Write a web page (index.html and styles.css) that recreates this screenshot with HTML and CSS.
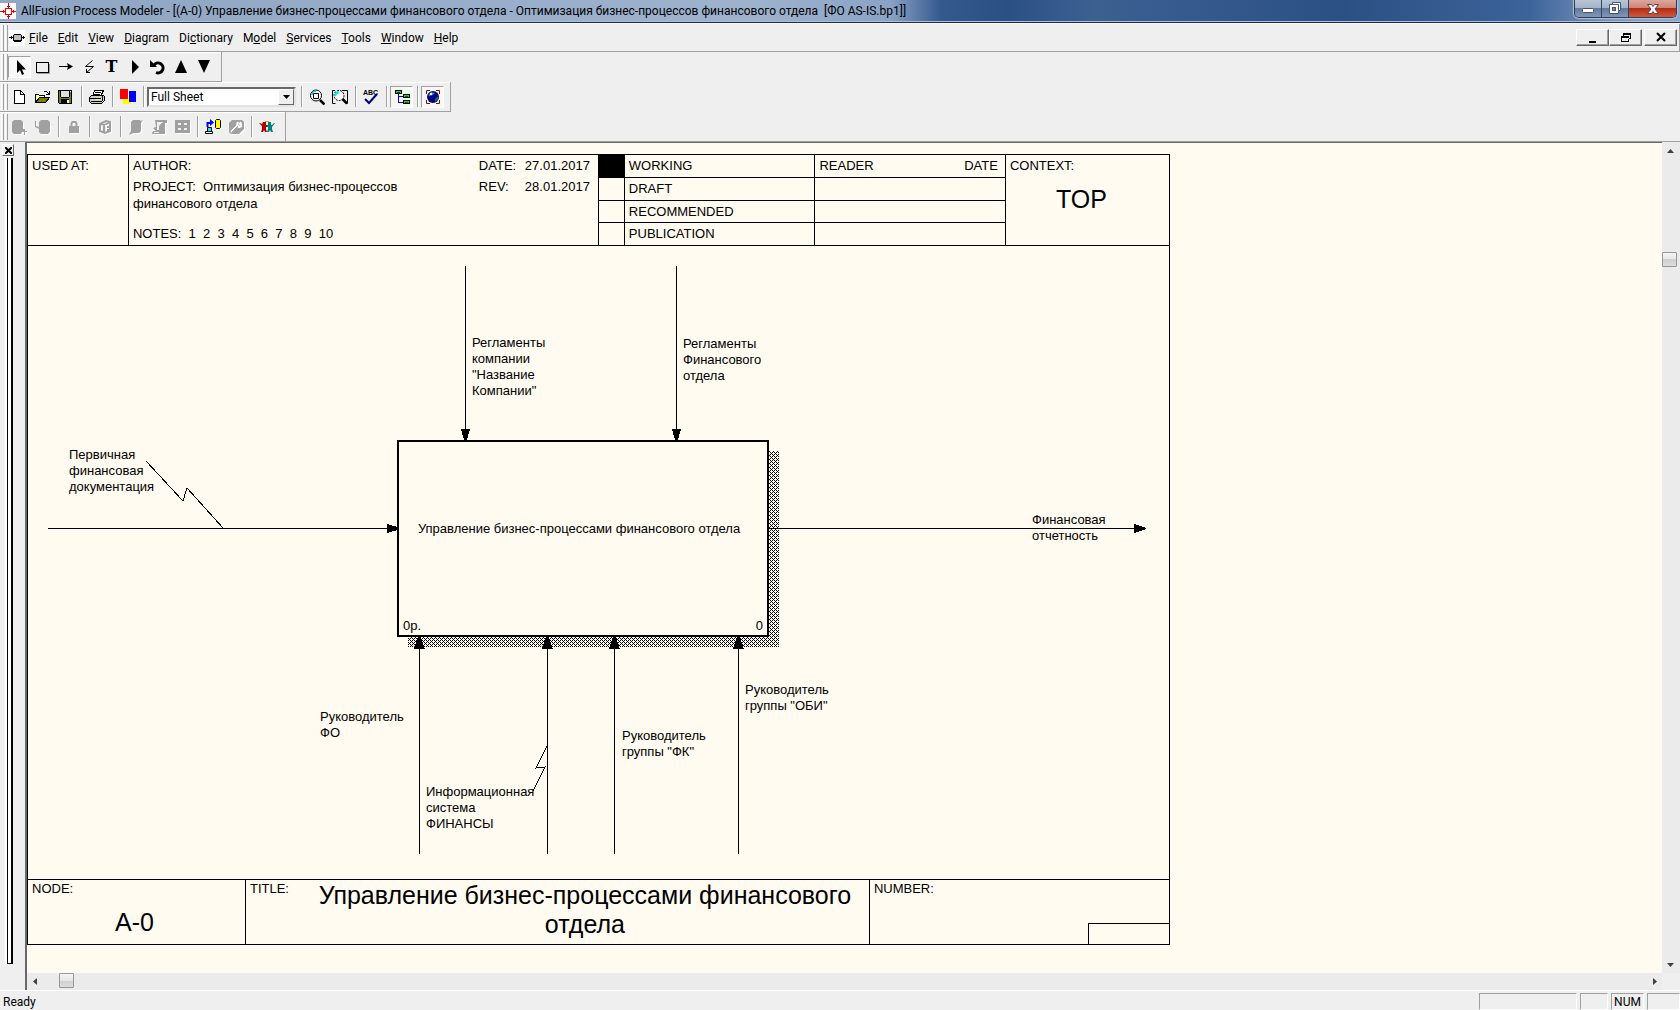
FILE: index.html
```html
<!DOCTYPE html>
<html lang="ru">
<head>
  <title>AllFusion Process Modeler</title>
  <meta charset="utf-8" />
  <meta name="viewport" content="width=device-width, initial-scale=1.0">
  <link rel="stylesheet" href="styles.css">
</head>
<body>

  <header class="titlebar">
    <svg class="app-icon" width="16" height="16" viewBox="0 0 16 16" shape-rendering="crispEdges">
      <rect width="16" height="16" fill="#fff" />
      <path d="M5.5 5.5h6v6h-6z" fill="none" stroke="#e00" />
      <path d="M8 0h1v5h-1zM8 12h1v4h-1zM0 8h5v1h-5zM12 8h4v1h-4zM7 3h3v1h-3zM7 13h3v1h-3zM3 7h1v3h-1zM13 7h1v3h-1z" fill="#e00" />
    </svg>
    <h1>AllFusion Process Modeler - [(A-0) Управление бизнес-процессами финансового отдела - Оптимизация бизнес-процессов финансового отдела &nbsp;[ФО AS-IS.bp1]]</h1>
    <div class="window-buttons">
      <button class="minimize" aria-label="Minimize">
        <svg width="14" height="12" viewBox="0 0 14 12"><rect x="1.5" y="5.5" width="11" height="4" rx="1" fill="#fff" stroke="#4a5468" /></svg>
      </button>
      <button class="restore" aria-label="Restore">
        <svg width="14" height="13" viewBox="0 0 14 13"><path d="M4.500.500h8v8h-2v3h-9v-9h3z" fill="#fff" stroke="#4a5468" /><path d="M4.500 2.500h6v6" fill="none" stroke="#4a5468" /><rect x="4.500" y="5.500" width="3" height="3" fill="#7c8ca6" stroke="#4a5468" /></svg>
      </button>
      <button class="close" aria-label="Close">
        <svg width="14" height="12" viewBox="0 0 14 12"><path d="M1.500 1.500h4l1.500 2l1.500-2h4l-3.500 4.500l3.500 4.500h-4l-1.500-2l-1.500 2h-4l3.500-4.500z" fill="#fff" stroke="#5c4450" /></svg>
      </button>
    </div>
  </header>

  <nav class="menubar">
    <span class="grip"></span>
    <svg class="doc-icon" width="16" height="16" viewBox="0 0 16 16" shape-rendering="crispEdges">
      <rect width="16" height="16" fill="#fff" />
      <path d="M5 4h7v1h1v6h-1v1h-7v-1h-1v-6h1z" fill="#000" />
      <path d="M5 5h7v5h-7z" fill="#c0c0c0" />
      <path d="M0 7h4v1h-4zM2 6h1v3h-1zM13 7h3v1h-3zM14 6h1v3h-1z" fill="#000" />
    </svg>
    <a href="#"><u>F</u>ile</a>
    <a href="#"><u>E</u>dit</a>
    <a href="#"><u>V</u>iew</a>
    <a href="#"><u>D</u>iagram</a>
    <a href="#">Di<u>c</u>tionary</a>
    <a href="#">M<u>o</u>del</a>
    <a href="#"><u>S</u>ervices</a>
    <a href="#"><u>T</u>ools</a>
    <a href="#"><u>W</u>indow</a>
    <a href="#"><u>H</u>elp</a>
    <div class="mdi-buttons">
      <button aria-label="Minimize diagram"><svg width="12" height="11" viewBox="0 0 12 11"><path d="M2 9h7v2h-7z" /></svg></button>
      <button aria-label="Restore diagram"><svg width="12" height="11" viewBox="0 0 12 11" shape-rendering="crispEdges"><path d="M3 1h8v6h-3v-1h2v-3h-6v1h-1zM1 4h8v6h-8zM2 6v3h6v-3z" fill-rule="evenodd" /></svg></button>
      <button aria-label="Close diagram"><svg width="12" height="11" viewBox="0 0 12 11"><path d="M2 1l8 8M10 1l-8 8" stroke="#000" stroke-width="2" /></svg></button>
    </div>
  </nav>

  <!-- diagram tools -->
  <div class="toolbar tools">
    <span class="grip"></span>
    <button class="tool pressed" aria-label="Pointer"><svg viewBox="0 0 16 16"><path d="M6 1v13l3-3l2 5l2-1l-2-4.500h4z" /></svg></button>
    <button class="tool" aria-label="Activity box"><svg viewBox="0 0 16 16" shape-rendering="crispEdges"><path d="M3 14.500h12.500v-10" fill="none" stroke="#a0a0a0" /><path d="M2.500 3.500h12v10h-12z" fill="none" stroke="#000" /></svg></button>
    <button class="tool" aria-label="Arrow"><svg viewBox="0 0 16 16"><path d="M2 7h9v1h-9zM10 4l6 3.500l-6 3.500l1-3.500z" /></svg></button>
    <button class="tool" aria-label="Squiggle"><svg viewBox="0 0 16 16"><path d="M12.500 1.500l-7 6h8l-7 6M6.500 14v-4M6 13.500h4" fill="none" stroke="#000" /></svg></button>
    <button class="tool text-tool" aria-label="Text">T</button>
    <button class="tool" aria-label="Diagram dictionary"><svg viewBox="0 0 16 16"><path d="M6 1l7 7l-7 7z" /></svg></button>
    <button class="tool" aria-label="Go to sibling"><svg viewBox="0 0 16 16"><path d="M5 6a5 5 0 1 1 2 7.500" fill="none" stroke="#000" stroke-width="3" /><path d="M1 1v7h7z" /></svg></button>
    <button class="tool" aria-label="Go to parent"><svg viewBox="0 0 16 16"><path d="M9 1l6 13h-12z" /></svg></button>
    <button class="tool" aria-label="Go to child"><svg viewBox="0 0 16 16"><path d="M9 14l6-13h-12z" /></svg></button>
  </div>

  <!-- standard toolbar -->
  <div class="toolbar standard">
    <span class="grip"></span>
    <button class="tool" aria-label="New"><svg viewBox="0 0 16 16" shape-rendering="crispEdges"><path d="M3.500 1.500h6l4 4v9h-10z" fill="#fff" stroke="#000" /><path d="M9.500 1.500v4h4" fill="none" stroke="#000" /></svg></button>
    <button class="tool" aria-label="Open"><svg viewBox="0 0 16 16" shape-rendering="crispEdges"><path d="M1.500 13.500v-8h3l1 1h5v2" fill="#ffff9c" stroke="#000" /><path d="M1.500 13.500l4-5h10l-4 5z" fill="#808000" stroke="#000" /><path d="M9 3h1v-1h3v1h1v1h1v-2h1v4h-4v-1h2v-1h-1v-1h-3z" /></svg></button>
    <button class="tool" aria-label="Save"><svg viewBox="0 0 16 16" shape-rendering="crispEdges"><path d="M1 1h14v14h-13l-1-1z" /><path d="M2 2h12v12h-12z" fill="#808000" /><path d="M4 2h8v6h-8z" fill="#e0e0e0" /><path d="M4 10h8v5h-8zM3 1h1v7h-1zM12 1h1v7h-1zM4 8h8v1h-8z" /><path d="M10 11h2v3h-2zM13 2h1v1h-1z" fill="#fff" /></svg></button>
    <span class="sep"></span>
    <button class="tool" aria-label="Print"><svg viewBox="0 0 16 16" shape-rendering="crispEdges"><path d="M5.500 1.500h9l-3 6h-8z" fill="#fff" stroke="#000" /><path d="M6 3h6v1h-6zM5 5h6v1h-6z" /><path d="M.500 8.500l2-2h12l1 1v4l-3 3h-10l-2-2z" fill="#d0d0d0" stroke="#000" /><path d="M1 9h11v1h-11zM2 12h11v1h-11zM13 7h1v5h-1z" /><path d="M7 10h4v1h-4z" fill="#ff0" /></svg></button>
    <span class="sep"></span>
    <button class="tool" aria-label="Colors"><svg viewBox="0 0 16 16" shape-rendering="crispEdges"><path d="M3 7h8v8h-8z" fill="#ff0" /><path d="M9 2h7v11h-7z" fill="#00f" /><path d="M0 0h8v10h-8z" fill="#f00" /></svg></button>
    <span class="sep"></span>
    <div class="zoom-box">
      <select aria-label="Zoom">
        <option>Full Sheet</option>
      </select>
      <span class="drop-arrow"><svg width="7" height="4" viewBox="0 0 7 4"><path d="M0 0h7l-3.500 4z" /></svg></span>
    </div>
    <span class="sep"></span>
    <button class="tool" aria-label="Zoom in"><svg viewBox="0 0 16 16"><circle cx="7" cy="6.500" r="5.500" fill="#fff" stroke="#000" /><path d="M3 6a4 4 0 0 1 4-4" fill="none" stroke="#0cc" stroke-width="1.500" /><path d="M4.500 4.500h5v5h-5z" fill="#fff" stroke="#000" /><path d="M11 11l4.500 4.500" stroke="#000" stroke-width="2.500" /></svg></button>
    <button class="tool" aria-label="Zoom to fit"><svg viewBox="0 0 16 16"><path d="M3 1.500h-2.500v13h3M10 1.500h5.500v13h-2" fill="none" stroke="#000" /><circle cx="7" cy="6.500" r="5" fill="#fff" stroke="#000" stroke-dasharray="2 1" /><path d="M3 7a5 5 0 0 1 4-4" fill="none" stroke="#0ee" stroke-width="2" /><path d="M10.500 10l4.500 4.500" stroke="#000" stroke-width="2.500" /></svg></button>
    <span class="sep"></span>
    <button class="tool" aria-label="Spelling"><svg viewBox="0 0 16 16"><text x="0" y="6" class="abc">ABC</text><path d="M2 10l4 4l8-9" fill="none" stroke="#000080" stroke-width="2" /></svg></button>
    <span class="sep"></span>
    <button class="tool pressed" aria-label="Model explorer"><svg viewBox="0 0 16 16" shape-rendering="crispEdges"><path d="M4.500 5v8.500h5M4.500 7.500h5" fill="none" stroke="#00f" /><path d="M1 1h7v4h-7zM9 5h7v4h-7zM9 11h7v4h-7z" /><path d="M2 2h5v2h-5zM10 6h5v2h-5zM10 12h5v2h-5z" fill="#0e0" /><path d="M3 3h3v1h-3zM11 7h3v1h-3zM11 13h3v1h-3z" fill="#060" /></svg></button>
    <span class="sep"></span>
    <button class="tool pressed" aria-label="ModelMart"><svg viewBox="0 0 16 16"><path d="M1.500 5v-3.500h3.500M11 1.500h3.500v3.500M1.500 11v3.500h3.500M11 14.500h3.500v-3.500" fill="none" stroke="#900" /><circle cx="8" cy="8" r="6" fill="#000084" /><path d="M3 6l3-3l4 1l-2 2l-3 1z" fill="#2a9a9a" /><path d="M5 4h2v2h-2z" fill="#fff" /><path d="M10 10l3-3v4l-3 2z" fill="#007070" /></svg></button>
  </div>

  <!-- ModelMart toolbar -->
  <div class="toolbar mart">
    <span class="grip"></span>
    <button class="tool off" aria-label="Connect" disabled><svg viewBox="0 0 16 16"><path d="M1 3l2-2h7l2 2v7h2v2h2v1h-2v3h-1v-3h-2l-1 2h-7l-2-2z" /></svg></button>
    <button class="tool off" aria-label="Disconnect" disabled><svg viewBox="0 0 16 16"><path d="M5 3l2-2h7l2 2v10l-2 2h-7l-2-2v-3l-4-2v-6h1v5l3 1z" /></svg></button>
    <span class="sep"></span>
    <button class="tool off" aria-label="Lock" disabled><svg viewBox="0 0 16 16"><path d="M3 7h10v7h-10z" /><path d="M5.500 7v-2.500l1-1.500h3l1 1.500v2.500" fill="none" stroke="#a0a0a0" stroke-width="2" /></svg></button>
    <span class="sep"></span>
    <button class="tool off" aria-label="Library" disabled><svg viewBox="0 0 16 16"><path d="M3 5l6-3l4 1v9l-5 2l-5-2zM7 6v8M3.500 5l4 1l5-3M10 8h2M10 11h2" fill="none" stroke="#a0a0a0" stroke-width="2" /><path d="M8 6h1v6h-1z" fill="#efefef" /></svg></button>
    <span class="sep"></span>
    <button class="tool off" aria-label="Review changes" disabled><svg viewBox="0 0 16 16"><path d="M3 3l2-2h7l1 1l2-1l-2 3v8l-2 2h-5l-5 2l2-4z" /></svg></button>
    <button class="tool off" aria-label="Merge" disabled><svg viewBox="0 0 16 16"><path d="M4 1h12v3h-2v11h-13l1-3h3l-3-3l3-1z" /><path d="M6 3h6l-4 4v4h-2v-5z" fill="#efefef" /><path d="M9 6l2-2l2 3v5h-4z" /><path d="M3 13h5v1h-5z" fill="#efefef" /></svg></button>
    <button class="tool off" aria-label="Versions" disabled><svg viewBox="0 0 16 16" shape-rendering="crispEdges"><path d="M1 1h15v13h-15z" /><path d="M4 4h3v2h-3zM10 4h3v2h-3zM4 9h3v2h-3zM10 9h3v2h-3z" fill="#efefef" /></svg></button>
    <span class="sep"></span>
    <button class="tool" aria-label="Synchronize"><svg viewBox="0 0 16 16"><path d="M2.500 8v-4h3" fill="none" stroke="#00f" stroke-width="2" /><path d="M5 0l4 3.500l-4 3.500z" fill="#00f" /><path d="M10.500 1.500l1-1h3l1 1v7l-1 1h-3l-1-1z" fill="#ff0" stroke="#000" /><path d="M2.500 8.500h4v4h-4z" fill="#0ee" stroke="#000" /><path d="M.500 12.500h7v2h-7z" fill="#fff" stroke="#000" /></svg></button>
    <button class="tool off" aria-label="Settings" disabled><svg viewBox="0 0 16 16"><path d="M1 4l3-3h10l2 2v7l-5 5h-8l-2-2z" /><path d="M3 13l6-6M10 3l-1 3l2 2l3-1M13 3l-1 2l2 1" fill="none" stroke="#fff" stroke-width="2" /><path d="M4 13l6-6" stroke="#a0a0a0" /></svg></button>
    <span class="sep"></span>
    <button class="tool" aria-label="Users"><svg viewBox="0 0 16 16"><path d="M4 3h3v3h1v2h-1v2l1 3h-2l-1-2l-1 2h-2l1-3v-3l-3-3h1l2 1z" fill="#b00000" /><path d="M9 3h3v3h1l2-2h1l-3 4v2l1 3h-2l-1-2l-1 2h-2l1-3v-2h-1v-2h1z" fill="#008080" /><path d="M6 2h4v1h-4z" fill="#e0a000" /></svg></button>
  </div>

  <main class="workspace">
    <aside class="dock">
      <button aria-label="Close panel"><svg width="7" height="7" viewBox="0 0 7 7"><path d="M0 0l7 7M7 0l-7 7" stroke="#000" stroke-width="2" /></svg></button>
      <span class="dock-bar"></span>
    </aside>

    <div class="canvas">
      <article class="sheet">

        <section class="sheet-head">
          <div class="cell">USED AT:</div>
          <div class="cell author">
            <p>AUTHOR:</p>
            <dl class="dates">
              <dt>DATE:</dt><dd>27.01.2017</dd>
              <dt>REV:</dt><dd>28.01.2017</dd>
            </dl>
            <p class="project">PROJECT: &nbsp;Оптимизация бизнес-процессов финансового отдела</p>
            <p class="notes">NOTES: &nbsp;1 &nbsp;2 &nbsp;3 &nbsp;4 &nbsp;5 &nbsp;6 &nbsp;7 &nbsp;8 &nbsp;9 &nbsp;10</p>
          </div>
          <table class="status">
            <tr><td class="mark current"></td><td>WORKING</td><td class="reader"><span>READER</span><span>DATE</span></td></tr>
            <tr><td class="mark"></td><td>DRAFT</td><td></td></tr>
            <tr><td class="mark"></td><td>RECOMMENDED</td><td></td></tr>
            <tr><td class="mark"></td><td>PUBLICATION</td><td></td></tr>
          </table>
          <div class="cell context">CONTEXT:<strong>TOP</strong></div>
        </section>

        <section class="diagram">
          <svg class="arrows" shape-rendering="crispEdges">
            <defs>
              <pattern id="dither" width="4" height="4" patternUnits="userSpaceOnUse">
                <path d="M0 0h1v1h-1zM2 0h1v1h-1zM1 1h1v1h-1zM0 2h1v1h-1zM2 2h1v1h-1zM3 3h1v1h-1z" />
              </pattern>
            </defs>
            <rect x="380" y="205" width="371" height="196" fill="url(#dither)" />
            <rect x="370" y="195" width="370" height="195" fill="#fffbf0" stroke="#000" stroke-width="2" />
            <!-- controls -->
            <path d="M437 20h1v174h-1zM433 183h9l-3 11h-3z" />
            <path d="M648 20h1v174h-1zM644 183h9l-3 11h-3z" />
            <!-- input and output -->
            <path d="M20 282h350v1h-350zM359 278l11 3v3l-11 3z" />
            <path d="M741 282h377v1h-377zM1106 278l12 4v1l-12 4z" />
            <!-- mechanisms -->
            <path d="M391 391h1v217h-1zM390 391h3l4 12h-11z" />
            <path d="M519 391h1v217h-1zM518 391h3l4 12h-11z" />
            <path d="M586 391h1v217h-1zM585 391h3l4 12h-11z" />
            <path d="M710 391h1v217h-1zM709 391h3l4 12h-11z" />
            <!-- squiggles -->
            <path d="M118 215l37 40l4-13l36 40M519 500l-11 22l9-1l-12 24" fill="none" stroke="#000" />
          </svg>

          <p class="label regulations">Регламенты компании "Название Компании"</p>
          <p class="label dept-regulations">Регламенты Финансового отдела</p>
          <p class="label source-docs">Первичная финансовая документация</p>
          <p class="label reports">Финансовая отчетность</p>
          <p class="label head-fo">Руководитель ФО</p>
          <p class="label info-system">Информационная система ФИНАНСЫ</p>
          <p class="label head-fk">Руководитель группы "ФК"</p>
          <p class="label head-obi">Руководитель группы "ОБИ"</p>

          <div class="activity">
            <p>Управление бизнес-процессами финансового отдела</p>
            <span class="cost">0р.</span>
            <span class="number">0</span>
          </div>
        </section>

        <footer class="sheet-foot">
          <div class="cell node">NODE:<strong>A-0</strong></div>
          <div class="cell title"><span>TITLE:</span><strong>Управление бизнес-процессами финансового отдела</strong></div>
          <div class="cell sheet-number">NUMBER:<span class="page-box"></span></div>
        </footer>
      </article>
    </div>

    <div class="scroll vertical">
      <button aria-label="Scroll up"><svg width="7" height="4" viewBox="0 0 7 4"><path d="M0 4h7l-3.500-4z" /></svg></button>
      <span class="thumb"></span>
      <button aria-label="Scroll down"><svg width="7" height="4" viewBox="0 0 7 4"><path d="M0 0h7l-3.500 4z" /></svg></button>
    </div>
    <div class="scroll horizontal">
      <button aria-label="Scroll left"><svg width="4" height="7" viewBox="0 0 4 7"><path d="M4 0v7l-4-3.500z" /></svg></button>
      <span class="thumb"></span>
      <button aria-label="Scroll right"><svg width="4" height="7" viewBox="0 0 4 7"><path d="M0 0v7l4-3.500z" /></svg></button>
    </div>
    <span class="corner"></span>
  </main>

  <footer class="statusbar">
    <span class="message">Ready</span>
    <span class="pane wide"></span>
    <span class="pane small"></span>
    <span class="pane">NUM</span>
    <span class="pane"></span>
  </footer>

</body>
</html>
```
FILE: styles.css
```css
* {
  box-sizing: border-box;
}

body {
  margin: 0;
  height: 100vh;
  display: flex;
  flex-direction: column;
  overflow: hidden;
  background: #efefef;
  color: #000;
  font-family: Roboto, "Noto Sans", sans-serif;
  font-size: 12px;
}

p, h1, dl, dd {
  margin: 0;
}

button {
  padding: 0;
  border: none;
  background: none;
  color: #000;
  display: flex;
  align-items: center;
  justify-content: center;
}

/* title bar */

.titlebar {
  height: 24px;
  flex: none;
  display: flex;
  align-items: flex-start;
  padding-right: 3px;
  background: linear-gradient(to right, #8fa6c4, #9db2cd 45%, #8aa3c6 53%, #34598d 56%, #2b5084 60%, #3c6090 65%, #2b5084 80%, #3c639a 91%, #7d97bb 96%, #8ea7c8);
  border-bottom: 1px solid #f8f8f8;
  box-shadow: inset 0 -1px #1f2c44, inset 0 -2px #a9bfdc;
}

.app-icon {
  margin-top: 3px;
}

.titlebar h1 {
  flex: 1;
  margin-left: 5px;
  font-size: 12px;
  font-weight: normal;
  line-height: 22px;
  white-space: nowrap;
}

.window-buttons {
  display: flex;
  height: 18px;
  border: 1px solid #2c3c58;
  border-top: none;
  border-radius: 0 0 5px 5px;
  overflow: hidden;
  box-shadow: 0 0 1px 1px #b4c4da;
}

.window-buttons button {
  width: 27px;
  background: linear-gradient(#b9c6d8, #a3b3ca 45%, #64799b 50%, #7f97b8);
  border-right: 1px solid #34435e;
}

.window-buttons .close {
  width: 47px;
  background: linear-gradient(#dba79c, #cf8577 45%, #b52c14 50%, #d0593c);
  border-right: none;
}

/* menu and toolbars */

.menubar {
  height: 28px;
  flex: none;
  display: flex;
  align-items: center;
  padding-right: 2px;
  border-bottom: 1px solid #a0a0a0;
  border-right: 1px solid #a0a0a0;
}

.menubar a {
  margin-right: 10px;
  color: #000;
  text-decoration: none;
  line-height: 16px;
}

.doc-icon {
  margin: 0 4px 0 1px;
}

.mdi-buttons {
  margin-left: auto;
  display: flex;
}

.mdi-buttons button {
  width: 33px;
  height: 17px;
  border: 1px solid;
  border-color: #fff #696969 #696969 #fff;
  box-shadow: inset -1px -1px #a0a0a0;
}

.mdi-buttons button:last-child {
  margin-left: 2px;
}

.grip {
  width: 8px;
  height: 26px;
  flex: none;
  border-right: 1px solid #a0a0a0;
  background: linear-gradient(to right, transparent 1px, #fff 1px 2px, transparent 2px 3px, #a0a0a0 3px 4px, transparent 4px 5px, #fff 5px 6px, transparent 6px);
}

.toolbar {
  height: 30px;
  flex: none;
  align-self: flex-start;
  display: flex;
  align-items: center;
  padding-right: 6px;
  border: 1px solid #a0a0a0;
  border-width: 0 1px 1px 0;
  box-shadow: inset 0 1px #fff;
}

.mart {
  height: 29px;
  padding-right: 7px;
  border-bottom: none;
}

.tool {
  width: 23px;
  height: 22px;
}

.tool svg {
  width: 16px;
  height: 16px;
  margin-right: 1px;
}

.sep ~ .tool svg {
  margin: 0 0 0 1px;
}

.tool.off svg {
  fill: #a0a0a0;
  filter: drop-shadow(1px 1px #fff);
}

.tool.pressed {
  background: #f8f8f8;
  border: 1px solid;
  border-color: #a0a0a0 #fff #fff #a0a0a0;
}

.text-tool {
  font: bold 16px "DejaVu Serif", serif;
}

.abc {
  font: bold 7px "Liberation Sans", Arial, sans-serif;
}

.sep {
  width: 8px;
  height: 21px;
  background: linear-gradient(to right, transparent 4px, #a0a0a0 4px 5px, #fff 5px 6px, transparent 6px);
}

.zoom-box {
  position: relative;
  width: 149px;
  height: 20px;
  margin-right: 1px;
}

.zoom-box select {
  appearance: none;
  width: 100%;
  height: 100%;
  padding: 0 20px 0 2px;
  border: 2px solid;
  border-color: #696969 #e3e3e3 #e3e3e3 #696969;
  border-radius: 0;
  background: #fff;
  color: #000;
  font: 12px Roboto, "Noto Sans", sans-serif;
}

.drop-arrow {
  position: absolute;
  top: 2px;
  right: 2px;
  bottom: 2px;
  width: 16px;
  display: flex;
  align-items: center;
  justify-content: center;
  background: #efefef;
  border: 1px solid;
  border-color: #fff #696969 #696969 #fff;
  pointer-events: none;
}

/* workspace */

.workspace {
  flex: 1;
  min-height: 0;
  display: grid;
  grid-template-columns: 25px 1fr 18px;
  grid-template-rows: 1fr 17px;
  border-top: 1px solid #a0a0a0;
}

.dock {
  grid-row: 1 / 3;
  display: flex;
  flex-direction: column;
  padding: 2px 0 26px 2px;
}

.dock button {
  width: 12px;
  height: 12px;
  border: 1px solid;
  border-color: #fff #696969 #696969 #fff;
}

.dock-bar {
  flex: 1;
  width: 6px;
  margin: 2px 0 0 5px;
  border: 1px solid #000;
  border-width: 0 2px 1px 1px;
  background: #fff;
  box-shadow: -2px 0 #fff;
}

.canvas {
  display: flex;
  overflow: hidden;
  border-top: 1px solid #696969;
  border-left: 2px solid #696969;
  background: #fffbf0;
}

.sheet {
  width: 69.9%;
  margin: 11px 0 28px;
  display: flex;
  flex-direction: column;
  border: 1px solid #000;
  font-family: "Liberation Sans", Arial, sans-serif;
  font-size: 13px;
  line-height: 16px;
}

.sheet-head {
  display: grid;
  grid-template-columns: 100fr 470fr 407fr 164fr;
  height: 91px;
  border-bottom: 1px solid #000;
}

.cell {
  padding: 3px 4px;
}

.cell + .cell,
.context {
  border-left: 1px solid #000;
}

.cell strong {
  font-size: 25px;
  line-height: 29px;
  font-weight: normal;
}

.author {
  display: grid;
  grid-template-columns: 1fr auto;
  grid-template-rows: 20px 1fr auto;
}

.dates {
  grid-column: 2;
  grid-row: 1 / 3;
  display: grid;
  grid-template-columns: 46px auto;
  grid-template-rows: 21px 21px;
  padding-right: 4px;
}

.project {
  grid-column: 1;
  max-width: 280px;
  line-height: 17px;
}

.notes {
  grid-column: 1 / 3;
}

.status {
  border-spacing: 0;
  border-left: 1px solid #000;
  height: 90px;
  width: 100%;
}

.status td {
  padding: 0 4px;
  border-bottom: 1px solid #000;
}

.status tr:last-child td {
  border-bottom: none;
}

.status td + td {
  width: 191px;
  border-left: 1px solid #000;
}

.status .mark {
  width: 25px;
}

.status .current {
  background: #000;
}

.reader span + span {
  float: right;
  padding-right: 3px;
}

.context,
.node {
  display: flex;
  flex-direction: column;
}

.context strong {
  margin-top: 11px;
  padding-right: 12px;
  text-align: center;
}

/* diagram area */

.diagram {
  position: relative;
  flex: 1;
}

.arrows {
  position: absolute;
  width: 100%;
  height: 100%;
}

.label {
  position: absolute;
  width: min-content;
}

.regulations {
  left: 444px;
  top: 89px;
}

.dept-regulations {
  left: 655px;
  top: 90px;
}

.source-docs {
  left: 41px;
  top: 201px;
}

.reports {
  left: 1004px;
  top: 266px;
}

.head-fo {
  left: 292px;
  top: 463px;
}

.info-system {
  left: 398px;
  top: 538px;
}

.head-fk {
  left: 594px;
  top: 482px;
}

.head-obi {
  left: 717px;
  top: 436px;
}

.head-fk,
.head-obi {
  width: 90px;
}

.activity {
  position: absolute;
  left: 369px;
  top: 194px;
  width: 372px;
  height: 197px;
  display: flex;
  align-items: center;
  justify-content: center;
  padding: 0 8px 20px 0;
}

.activity p {
  white-space: nowrap;
}

.cost,
.number {
  position: absolute;
  bottom: 3px;
}

.cost {
  left: 6px;
}

.number {
  right: 6px;
}

/* sheet footer */

.sheet-foot {
  display: grid;
  grid-template-columns: 217fr 624fr 300fr;
  height: 65px;
  border-top: 1px solid #000;
}

.sheet-foot .cell {
  padding-top: 1px;
}

.node strong {
  margin-top: 11px;
  padding-right: 4px;
  text-align: center;
}

.title {
  display: flex;
}

.title strong {
  flex: 1;
  padding-left: 16px;
  text-align: center;
}

.sheet-number {
  position: relative;
}

.page-box {
  position: absolute;
  right: 0;
  bottom: 0;
  width: 81px;
  height: 21px;
  border: 1px solid #000;
  border-width: 1px 0 0 1px;
}

/* scrollbars */

.scroll {
  display: flex;
  justify-content: space-between;
  background: #ebebeb;
}

.scroll svg {
  fill: #404040;
}

.vertical {
  flex-direction: column;
  padding-right: 2px;
}

.vertical button {
  height: 17px;
}

.vertical .thumb {
  margin: 93px 0 auto;
}

.horizontal {
  grid-column: 2;
  border-left: 2px solid #696969;
}

.horizontal button {
  width: 15px;
}

.horizontal .thumb {
  margin: 0 auto 0 17px;
}

.thumb {
  width: 15px;
  height: 15px;
  border: 1px solid #979797;
  border-radius: 1px;
  background: linear-gradient(#f5f5f5, #e6e6e6 50%, #d0d0d0 50%, #dcdcdc);
}

/* status bar */

.statusbar {
  height: 20px;
  flex: none;
  display: flex;
  align-items: flex-end;
  gap: 3px;
  border-top: 1px solid #fff;
  line-height: 16px;
}

.message {
  flex: 1;
  padding-left: 3px;
}

.pane {
  width: 33px;
  height: 17px;
  text-align: center;
  border: 1px solid;
  border-color: #a0a0a0 #fff #fff #a0a0a0;
}

.pane.wide {
  width: 98px;
}

.pane.small {
  width: 28px;
}
```
